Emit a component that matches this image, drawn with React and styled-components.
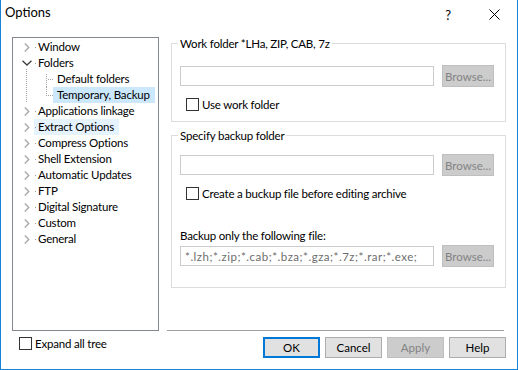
import React from 'react';
import styled, { createGlobalStyle, css } from 'styled-components';

const GlobalStyle = createGlobalStyle`
  html, body { margin: 0; padding: 0; background: #fff; }
  body { font-family: Lato, "Noto Sans", sans-serif; font-size: 11.5px; letter-spacing: -0.2px; color: #000; }
  * { box-sizing: border-box; }
`;

const Window = styled.div`
  width: 518px;
  height: 370px;
  display: flex;
  flex-direction: column;
  background: #fff;
  border: 1px solid #1883d7;
  border-top: none;
`;

const TitleBar = styled.div`
  height: 31px;
  display: flex;
  align-items: flex-start;
  flex-shrink: 0;
`;

const Title = styled.div`
  flex: 1;
  padding: 3px 0 0 4px;
  line-height: 18px;
  font-size: 13px;
  letter-spacing: 0;
`;

const CaptionButton = styled.div`
  width: 46px;
  height: 29px;
  display: flex;
  align-items: center;
  justify-content: center;
  font-size: 13px;
`;

const Content = styled.div`
  display: flex;
  gap: 8px;
  padding: 6px 11px 0;
  height: 300px;
  flex-shrink: 0;
`;

const Tree = styled.div`
  width: 147px;
  height: 294px;
  border: 1px solid #828790;
  padding-top: 1px;
  flex-shrink: 0;
`;

const TreeRow = styled.div`
  height: 16px;
  display: flex;
  align-items: stretch;
`;

const dotted = css`
  background: repeating-linear-gradient(to bottom, #a0a0a0 0 1px, transparent 1px 2px);
`;

const Expander = styled.div`
  width: 15px;
  margin-left: 6px;
  display: flex;
  align-items: center;
  justify-content: center;
  position: relative;
  ${(p) =>
    p.$lineBelow &&
    css`
      &::after {
        content: '';
        position: absolute;
        left: 7px;
        bottom: 0;
        width: 1px;
        height: 2px;
        ${dotted}
      }
    `}
`;

const Indent = styled.div`
  width: 40px;
  position: relative;
  flex-shrink: 0;
`;

const RootLine = styled.span`
  position: absolute;
  left: 13px;
  top: 0;
  bottom: ${(p) => (p.$last ? '1px' : '0')};
  width: 1px;
  ${dotted}
`;

const BranchV = styled.span`
  position: absolute;
  left: 33px;
  top: ${(p) => (p.$first ? '3px' : '0')};
  height: ${(p) => (p.$first ? '13px' : '9px')};
  width: 1px;
  ${dotted}
`;

const BranchH = styled.span`
  position: absolute;
  left: 34px;
  top: 8px;
  width: 6px;
  height: 1px;
  background: repeating-linear-gradient(to right, transparent 0 1px, #a0a0a0 1px 2px);
`;

const TreeLabel = styled.div`
  position: relative;
  display: flex;
  align-items: center;
  padding: 0 5px 0 4px;
  white-space: nowrap;
  line-height: 16px;
  background: ${(p) => (p.$selected ? '#cce8ff' : p.$hover ? '#e5f3ff' : 'transparent')};
  ${(p) =>
    p.$dot &&
    css`
      &::before {
        content: '';
        position: absolute;
        left: 1px;
        top: 8px;
        width: 1px;
        height: 1px;
        background: #a0a0a0;
      }
    `}
`;

const RightPanel = styled.div`
  width: 339px;
  height: 294px;
  display: flex;
  flex-direction: column;
`;

const Group = styled.div`
  position: relative;
  margin: ${(p) => p.$top}px 0 0 4px;
  height: ${(p) => p.$height}px;
  border: 1px solid #dcdcdc;
  flex-shrink: 0;
`;

const Legend = styled.span`
  position: absolute;
  top: -8px;
  left: 6px;
  padding: 0 2px;
  background: #fff;
  line-height: 15px;
  white-space: nowrap;
`;

const FieldRow = styled.div`
  display: flex;
  align-items: center;
  height: 22px;
  margin: ${(p) => p.$top}px 0 0 8px;
`;

const TextBox = styled.input`
  width: 254px;
  height: 20px;
  border: 1px solid #cccccc;
  background: #fff;
  padding: 0 4px;
  margin: 0;
  font: inherit;
  letter-spacing: 0.5px;
  color: #6d6d6d;
  outline: none;
`;

const BrowseButton = styled.button`
  width: 52px;
  height: 22px;
  margin-left: 8px;
  padding: 0;
  border: 1px solid #bfbfbf;
  background: #cccccc;
  color: #838383;
  font: inherit;
  letter-spacing: 0;
`;

const CheckRow = styled.label`
  display: flex;
  align-items: center;
  gap: 3px;
  height: 13px;
  margin: ${(p) => p.$top || 0}px 0 0 ${(p) => p.$left || 0}px;
  line-height: 15px;
  white-space: nowrap;
`;

const Box = styled.span`
  width: 13px;
  height: 13px;
  border: 1px solid #333;
  background: #fff;
  flex-shrink: 0;
`;

const FieldCaption = styled.div`
  margin: 28px 0 0 8px;
  line-height: 15px;
`;

const Separator = styled.div`
  margin-top: auto;
  width: 337px;
  height: 1px;
  background: #a0a0a0;
  flex-shrink: 0;
`;

const BottomBar = styled.div`
  flex: 1;
  display: flex;
  align-items: flex-start;
  padding: 6px 11px 0;
`;

const Buttons = styled.div`
  margin-left: auto;
  display: flex;
  gap: 5px;
`;

const DialogButton = styled.button`
  width: 57px;
  height: 21px;
  padding: 0;
  font: inherit;
  letter-spacing: 0;
  border: 1px solid #adadad;
  background: #e1e1e1;
  color: #000;
  ${(p) =>
    p.$default &&
    css`
      border: 2px solid #0078d7;
    `}
  ${(p) =>
    p.disabled &&
    css`
      border-color: #bfbfbf;
      background: #cccccc;
      color: #838383;
    `}
`;

const ChevronRight = () => (
  <svg width="6" height="9" viewBox="0 0 6 9">
    <path d="M0.8 0.5 L4.8 4.5 L0.8 8.5" fill="none" stroke="#a6a6a6" strokeWidth="1.3" />
  </svg>
);

const ChevronDown = () => (
  <svg width="10" height="6" viewBox="0 0 10 6">
    <path d="M0.5 0.8 L5 5 L9.5 0.8" fill="none" stroke="#404040" strokeWidth="1.3" />
  </svg>
);

const CloseGlyph = () => (
  <svg width="11" height="11" viewBox="0 0 11 11">
    <path d="M0.5 0.5 L10.5 10.5 M10.5 0.5 L0.5 10.5" stroke="#000" strokeWidth="1" />
  </svg>
);

const rootItems = [
  { label: 'Window' },
  {
    label: 'Folders',
    open: true,
    children: [{ label: 'Default folders' }, { label: 'Temporary, Backup', selected: true }],
  },
  { label: 'Applications linkage' },
  { label: 'Extract Options', hover: true },
  { label: 'Compress Options' },
  { label: 'Shell Extension' },
  { label: 'Automatic Updates' },
  { label: 'FTP' },
  { label: 'Digital Signature' },
  { label: 'Custom' },
  { label: 'General' },
];

export default function App() {
  return (
    <>
      <GlobalStyle />
      <Window>
        <TitleBar>
          <Title>Options</Title>
          <CaptionButton>?</CaptionButton>
          <CaptionButton>
            <CloseGlyph />
          </CaptionButton>
        </TitleBar>
        <Content>
          <Tree>
            {rootItems.map((item) => (
              <React.Fragment key={item.label}>
                <TreeRow>
                  <Expander $lineBelow={item.open}>{item.open ? <ChevronDown /> : <ChevronRight />}</Expander>
                  <TreeLabel $dot $hover={item.hover} $selected={item.selected}>
                    {item.label}
                  </TreeLabel>
                </TreeRow>
                {item.open &&
                  item.children.map((c, i) => (
                    <TreeRow key={c.label}>
                      <Indent>
                        <RootLine $last={i === item.children.length - 1} />
                        <BranchV $first={i === 0} />
                        <BranchH />
                      </Indent>
                      <TreeLabel $selected={c.selected}>{c.label}</TreeLabel>
                    </TreeRow>
                  ))}
              </React.Fragment>
            ))}
          </Tree>
          <RightPanel>
            <Group $top={6} $height={79}>
              <Legend>Work folder *LHa, ZIP, CAB, 7z</Legend>
              <FieldRow $top={21}>
                <TextBox readOnly value="" />
                <BrowseButton disabled>Browse...</BrowseButton>
              </FieldRow>
              <CheckRow $top={11} $left={14}>
                <Box />
                Use work folder
              </CheckRow>
            </Group>
            <Group $top={13} $height={153}>
              <Legend>Specify backup folder</Legend>
              <FieldRow $top={18}>
                <TextBox readOnly value="" />
                <BrowseButton disabled>Browse...</BrowseButton>
              </FieldRow>
              <CheckRow $top={11} $left={14}>
                <Box />
                Create a buckup file before editing archive
              </CheckRow>
              <FieldCaption>Backup only the following file:</FieldCaption>
              <FieldRow $top={2}>
                <TextBox readOnly value="*.lzh;*.zip;*.cab;*.bza;*.gza;*.7z;*.rar;*.exe;" />
                <BrowseButton disabled>Browse...</BrowseButton>
              </FieldRow>
            </Group>
            <Separator />
          </RightPanel>
        </Content>
        <BottomBar>
          <CheckRow $left={7}>
            <Box />
            Expand all tree
          </CheckRow>
          <Buttons>
            <DialogButton $default>OK</DialogButton>
            <DialogButton>Cancel</DialogButton>
            <DialogButton disabled>Apply</DialogButton>
            <DialogButton>Help</DialogButton>
          </Buttons>
        </BottomBar>
      </Window>
    </>
  );
}
